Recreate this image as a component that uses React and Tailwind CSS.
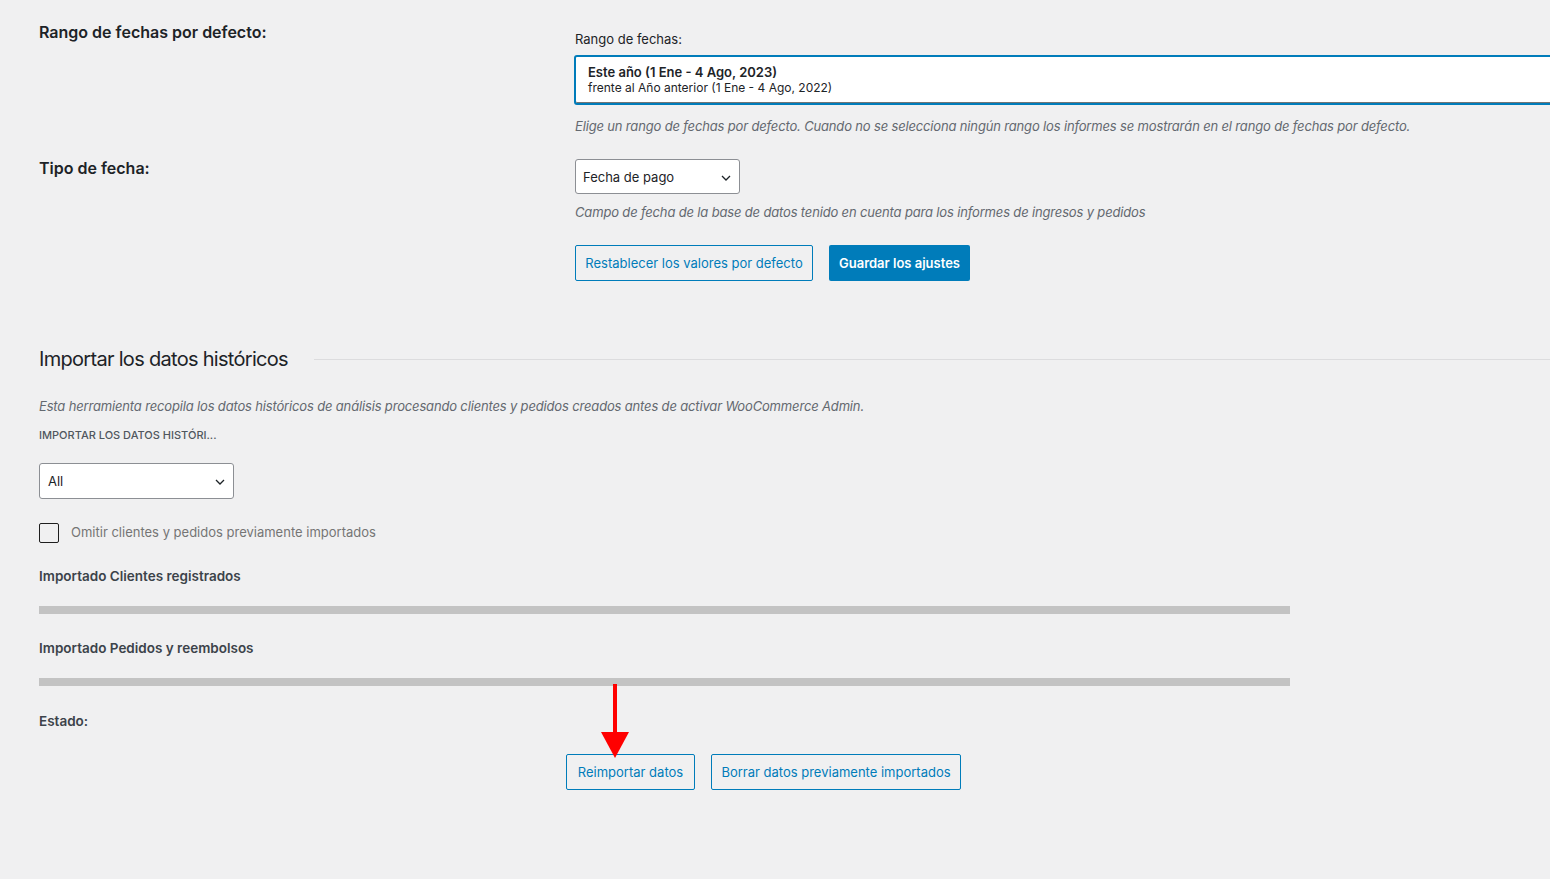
import React from "react";

const Chevron = () => (
  <svg width="10" height="6" viewBox="0 0 10 6" fill="none" className="shrink-0">
    <path d="M1 1l4 4 4-4" stroke="#1d2327" strokeWidth="1.3" />
  </svg>
);

export default function App() {
  return (
    <div
      className="relative min-h-screen w-full overflow-hidden bg-[#f0f0f1] pl-[39px] pt-[22px] text-[#1d2327]"
      style={{ fontFamily: "Inter, 'Noto Sans', sans-serif" }}
    >
      {/* Row 1 */}
      <div className="flex">
        <div className="w-[536px] shrink-0 text-[16px] font-semibold leading-[20px] text-[#1d2327]">
          Rango de fechas por defecto:
        </div>
        <div className="flex-1 pt-[9px]">
          <div className="text-[13px] leading-[16px] text-[#1d2327]">Rango de fechas:</div>
          <div className="-ml-px mt-2 w-[1000px] rounded-[3px] border-2 border-[#007cba] bg-white shadow-[inset_0_-1px_0_#757575] pl-[12px] pt-[7px] pb-[7px]">
            <div className="text-[13px] font-semibold leading-[16px] text-[#1d2327]">
              Este año (1 Ene - 4 Ago, 2023)
            </div>
            <div className="text-[12px] leading-[16px] text-[#1d2327]">
              frente al Año anterior (1 Ene - 4 Ago, 2022)
            </div>
          </div>
          <div className="mt-3 text-[13px] italic leading-[18px] tracking-[-0.16px] text-[#646970]">
            Elige un rango de fechas por defecto. Cuando no se selecciona ningún rango los informes se mostrarán en el rango de fechas por defecto.
          </div>
        </div>
      </div>

      {/* Row 2 */}
      <div className="mt-[23px] flex">
        <div className="w-[536px] shrink-0 text-[16px] font-semibold leading-[20px] text-[#1d2327]">
          Tipo de fecha:
        </div>
        <div className="flex-1 pt-[1px]">
          <div className="flex h-[35px] w-[165px] items-center justify-between rounded-[3px] border border-[#8c8f94] bg-white pl-[7px] pr-[8px] pt-[2px] text-[13px] text-[#1d2327]">
            <span>Fecha de pago</span>
            <Chevron />
          </div>
          <div className="mt-[9px] text-[13px] italic leading-[18px] tracking-[-0.16px] text-[#646970]">
            Campo de fecha de la base de datos tenido en cuenta para los informes de ingresos y pedidos
          </div>
          <div className="mt-[24px] flex gap-4">
            <button className="flex h-[36px] w-[238px] items-center justify-center rounded-[2px] border border-[#007cba] bg-transparent pt-px text-[13px] text-[#007cba]">
              Restablecer los valores por defecto
            </button>
            <button className="flex h-[36px] w-[141px] items-center justify-center rounded-[2px] bg-[#007cba] pt-px text-[13px] font-semibold text-white">
              Guardar los ajustes
            </button>
          </div>
        </div>
      </div>

      {/* Section */}
      <div className="mt-[64px] flex items-center">
        <h2 className="text-[20px] font-normal leading-[28px] tracking-[-0.7px] text-[#1d2327]">Importar los datos históricos</h2>
        <div className="ml-[26px] h-px flex-1 bg-[#dcdcde]" />
      </div>
      <div className="mt-[24px] text-[13px] italic leading-[18px] tracking-[-0.16px] text-[#646970]">
        Esta herramienta recopila los datos históricos de análisis procesando clientes y pedidos creados antes de activar WooCommerce Admin.
      </div>
      <div className="mt-[12px] text-[11px] font-medium uppercase leading-[16px] text-[#50575e]">
        Importar los datos históri...
      </div>
      <div className="mt-[20px] flex h-[36px] w-[195px] items-center justify-between rounded-[3px] border border-[#8c8f94] bg-white pl-[8px] pr-[8px] pt-px text-[13px] text-[#1d2327]">
        <span>All</span>
        <Chevron />
      </div>
      <div className="mt-[24px] flex items-center gap-3">
        <div className="h-[20px] w-[20px] rounded-[2px] border border-[#1e1e1e] bg-transparent" />
        <span className="text-[13px] text-[#757575]">Omitir clientes y pedidos previamente importados</span>
      </div>

      <div className="mt-[24px] text-[13.5px] font-semibold leading-[18px] text-[#3c434a]">
        Importado Clientes registrados
      </div>
      <div className="mt-[21px] h-[8px] w-[1251px] bg-[#c3c3c3]" />
      <div className="mt-[25px] text-[13.5px] font-semibold leading-[18px] text-[#3c434a]">
        Importado Pedidos y reembolsos
      </div>
      <div className="mt-[21px] h-[8px] w-[1251px] bg-[#c3c3c3]" />
      <div className="mt-[26px] text-[13.5px] font-semibold leading-[18px] text-[#3c434a]">Estado:</div>

      <div className="ml-[527px] mt-[24px] flex gap-4">
        <button className="flex h-[36px] w-[129px] items-center justify-center rounded-[2px] border border-[#007cba] pt-px text-[13px] text-[#007cba]">
          Reimportar datos
        </button>
        <button className="flex h-[36px] w-[250px] items-center justify-center rounded-[2px] border border-[#007cba] pt-px text-[13px] text-[#007cba]">
          Borrar datos previamente importados
        </button>
      </div>

      {/* Red arrow annotation */}
      <svg className="absolute left-[598px] top-[682px]" width="34" height="80" viewBox="0 0 34 80">
        <line x1="17" y1="2" x2="17" y2="54" stroke="#ff0000" strokeWidth="4" />
        <polygon points="3,50 31,50 17,76" fill="#ff0000" />
      </svg>
    </div>
  );
}
